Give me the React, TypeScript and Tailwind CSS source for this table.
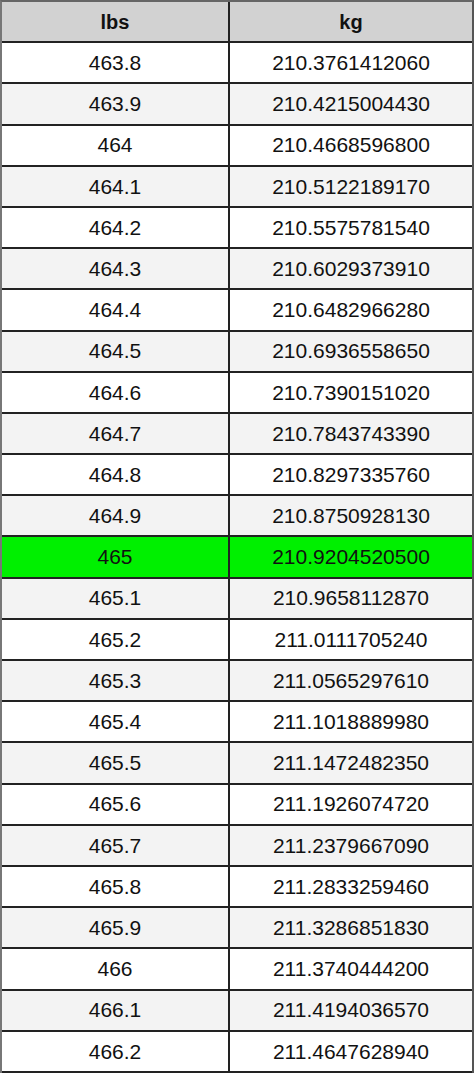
const rows: [string, string][] = [
  ['463.8', '210.3761412060'],
  ['463.9', '210.4215004430'],
  ['464', '210.4668596800'],
  ['464.1', '210.5122189170'],
  ['464.2', '210.5575781540'],
  ['464.3', '210.6029373910'],
  ['464.4', '210.6482966280'],
  ['464.5', '210.6936558650'],
  ['464.6', '210.7390151020'],
  ['464.7', '210.7843743390'],
  ['464.8', '210.8297335760'],
  ['464.9', '210.8750928130'],
  ['465', '210.9204520500'],
  ['465.1', '210.9658112870'],
  ['465.2', '211.0111705240'],
  ['465.3', '211.0565297610'],
  ['465.4', '211.1018889980'],
  ['465.5', '211.1472482350'],
  ['465.6', '211.1926074720'],
  ['465.7', '211.2379667090'],
  ['465.8', '211.2833259460'],
  ['465.9', '211.3286851830'],
  ['466', '211.3740444200'],
  ['466.1', '211.4194036570'],
  ['466.2', '211.4647628940'],
]

export default function App() {
  return (
    <div className="h-[1077px] w-[474px] bg-white font-['Liberation_Sans',Arial,sans-serif] text-[#111]">
      <div className="flex h-[1073px] flex-col border-l-2 border-r-2 border-t-2 border-l-[#777] border-r-[#555] border-t-[#666]">
        <div className="flex flex-1 border-b-2 border-[#222] bg-[#d2d2d2] text-[20px] font-bold">
          <div className="flex w-[228px] items-center justify-center border-r-2 border-[#222]">lbs</div>
          <div className="flex flex-1 items-center justify-center">kg</div>
        </div>
        {rows.map(([lbs, kg], i) => {
          const hit = lbs === '465'
          return (
            <div
              key={lbs}
              className={
                'flex flex-1 border-b-2 border-[#222] text-[21px] ' +
                (hit ? 'bg-[#00f000]' : i % 2 === 0 ? 'bg-white' : 'bg-[#f3f3f3]')
              }
            >
              <div className="flex w-[228px] items-center justify-center border-r-2 border-[#222]">{lbs}</div>
              <div className="flex flex-1 items-center justify-center">{kg}</div>
            </div>
          )
        })}
      </div>
    </div>
  )
}
